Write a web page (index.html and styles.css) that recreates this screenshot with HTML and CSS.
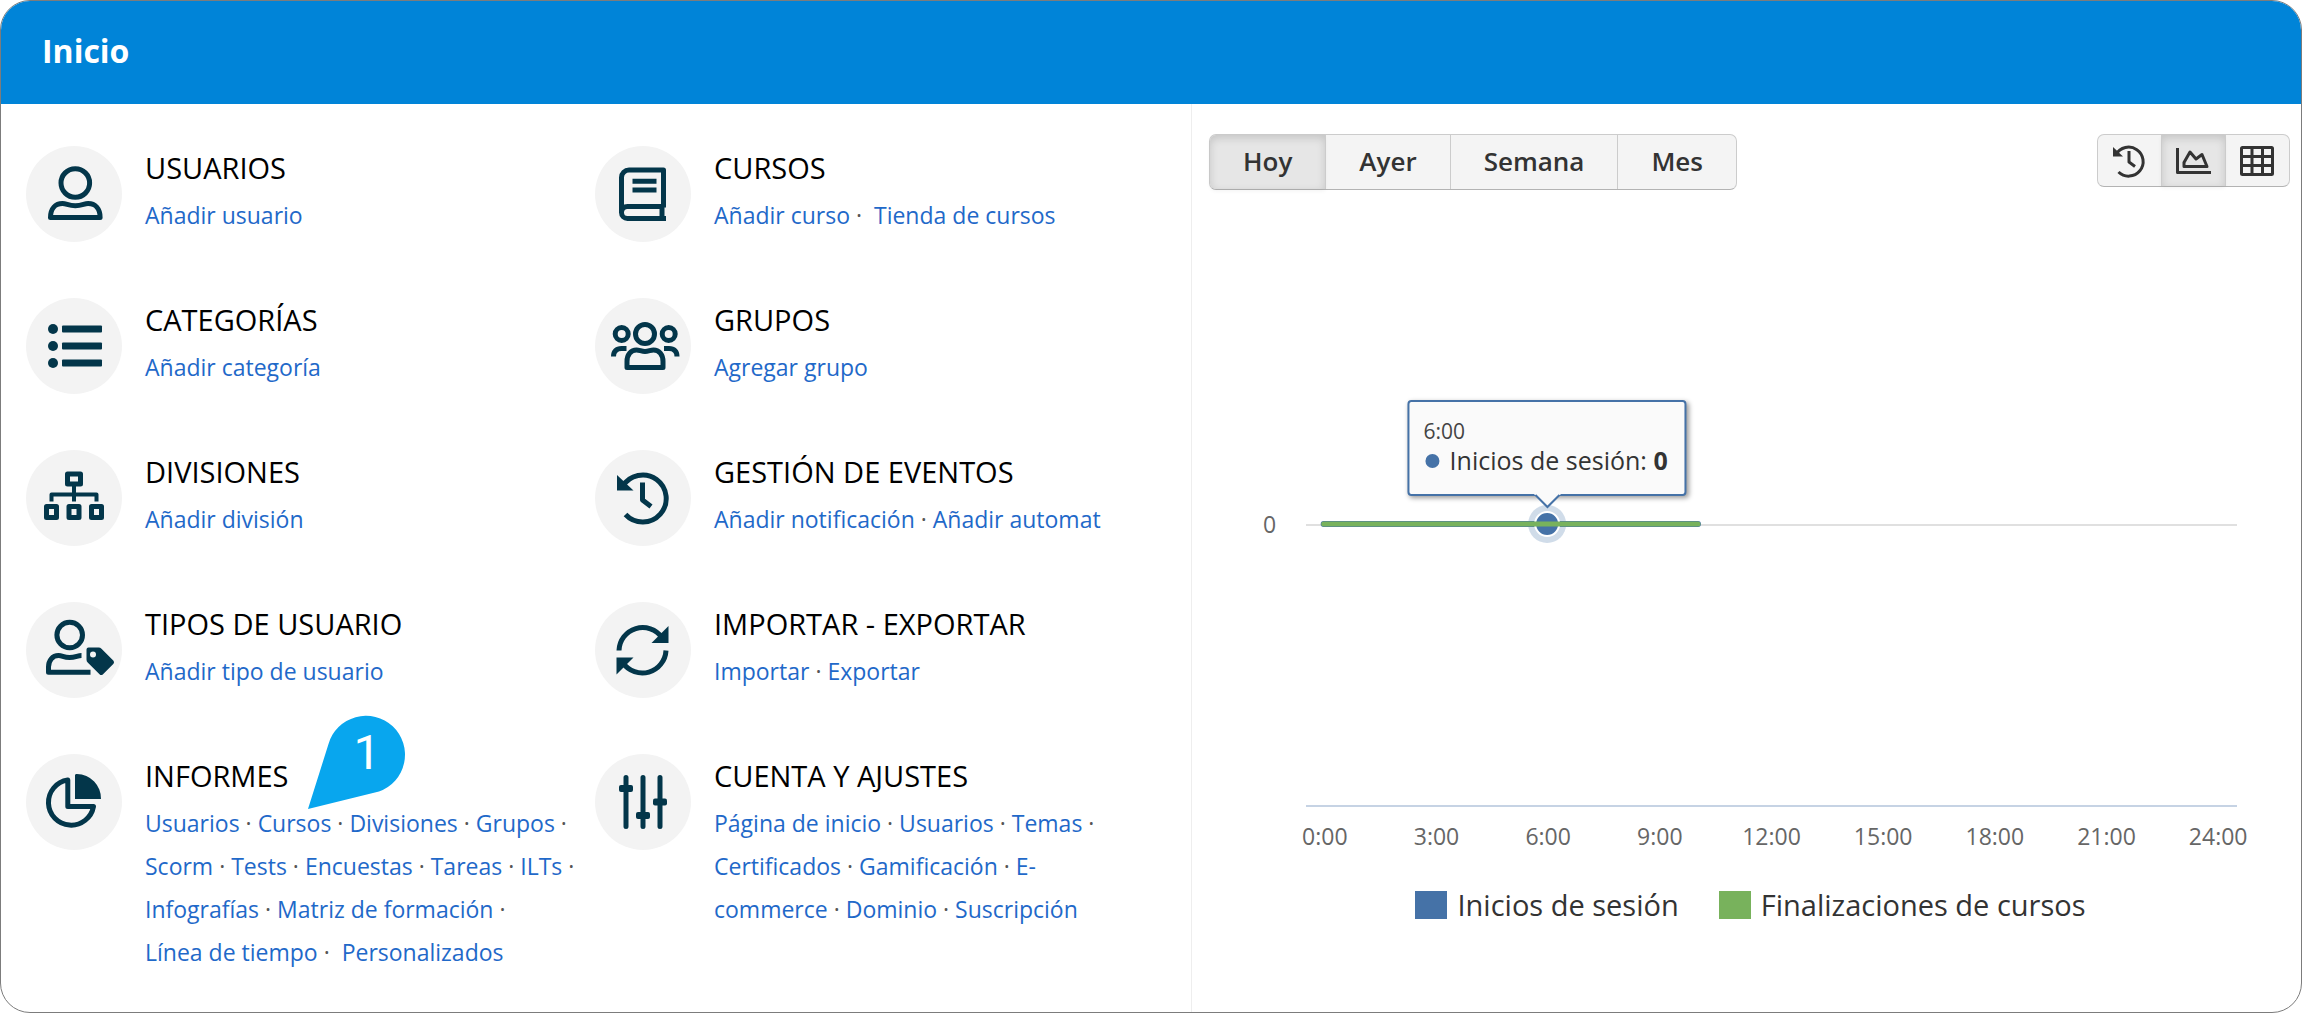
FILE: index.html
```html
<!DOCTYPE html>
<html lang="es">
<head>
<meta charset="utf-8">
<meta name="viewport" content="width=device-width, initial-scale=1">
<title>Inicio</title>
<link rel="stylesheet" href="styles.css">
</head>
<body>
<div class="card">
  <header class="topbar"><h1>Inicio</h1></header>
  <main class="content">
    <nav class="menu" aria-label="Administración">
      <section class="item">
        <svg class="icon" viewBox="0 0 96 96" aria-hidden="true"><circle cx="49.300" cy="37" r="14.300"/><path d="M24.500 71.500c0-9 5-14 12-14 4 0 6 2.200 12.800 2.200s8.800-2.200 12.800-2.200c7 0 12 5 12 14z"/></svg>
        <div class="text">
          <h2>USUARIOS</h2>
          <p><a href="#">Añadir usuario</a></p>
        </div>
      </section>
      <section class="item">
        <svg class="icon" viewBox="0 0 96 96" aria-hidden="true"><path d="M68.500 61.500V24H34a7.500 7.500 0 0 0-7.500 7.500v35a6 6 0 0 0 6 6H71M26.500 66.500a6 6 0 0 1 6-6h36M67 61v11M37.500 35.300h24M37.500 44h24"/></svg>
        <div class="text">
          <h2>CURSOS</h2>
          <p><a href="#">Añadir curso</a> ·&nbsp; <a href="#">Tienda de cursos</a></p>
        </div>
      </section>
      <section class="item">
        <svg class="icon" viewBox="0 0 96 96" aria-hidden="true"><g class="solid"><circle cx="27" cy="31" r="5"/><circle cx="27" cy="48" r="5"/><circle cx="27" cy="65" r="5"/><rect x="36" y="27.500" width="40" height="7" rx="1"/><rect x="36" y="44.500" width="40" height="7" rx="1"/><rect x="36" y="61.500" width="40" height="7" rx="1"/></g></svg>
        <div class="text">
          <h2>CATEGORÍAS</h2>
          <p><a href="#">Añadir categoría</a></p>
        </div>
      </section>
      <section class="item">
        <svg class="icon" viewBox="0 0 96 96" aria-hidden="true"><circle cx="50" cy="36" r="9.500"/><circle cx="26.700" cy="36" r="6.500"/><circle cx="73.700" cy="36" r="6.500"/><path d="M32 69.500v-6c0-7 4-11.500 9.500-11.500 3 0 5 1.500 8.500 1.500s5.500-1.500 8.500-1.500c5.500 0 9.500 4.500 9.500 11.500v6zM18.500 58.500c0-5 3-8 8-8h5M82 58.500c0-5-3-8-8-8h-5"/></svg>
        <div class="text">
          <h2>GRUPOS</h2>
          <p><a href="#">Agregar grupo</a></p>
        </div>
      </section>
      <section class="item">
        <svg class="icon" viewBox="0 0 96 96" aria-hidden="true"><rect x="41.500" y="24" width="13" height="10"/><rect x="20.500" y="56.500" width="10" height="11"/><rect x="43" y="56.500" width="10" height="11"/><rect x="65.500" y="56.500" width="10" height="11"/><path class="thin" d="M48 36v15.500M25.500 51.500v-7h45v7"/></svg>
        <div class="text">
          <h2>DIVISIONES</h2>
          <p><a href="#">Añadir división</a></p>
        </div>
      </section>
      <section class="item">
        <svg class="icon" viewBox="0 0 96 96" aria-hidden="true"><path d="M27.500 36.500A23.500 23.500 0 1 1 30.500 64.500M47.500 32.500V50l8.500 6.500"/><path class="solid" d="M22 25v15.500h16.500z"/></svg>
        <div class="text">
          <h2>GESTIÓN DE EVENTOS</h2>
          <p><a href="#">Añadir notificación</a> · <a href="#">Añadir automat</a></p>
        </div>
      </section>
      <section class="item">
        <svg class="icon" viewBox="0 0 96 96" aria-hidden="true"><circle cx="43.700" cy="33" r="12.800"/><path d="M55.500 53.500c-4 0-6 2-12 2s-7-2-11-2c-6 0-10 5-10 11.500v5.200h42"/><path class="solid" d="M62.500 45.500h10a4 4 0 0 1 3 1.200l12 12a2.500 2.500 0 0 1 0 3L77 72.200a2.500 2.500 0 0 1-3.500 0L61.700 60.500a4 4 0 0 1-1.200-3V47.500a2 2 0 0 1 2-2z"/><circle class="hole" cx="67" cy="52.500" r="3"/></svg>
        <div class="text">
          <h2>TIPOS DE USUARIO</h2>
          <p><a href="#">Añadir tipo de usuario</a></p>
        </div>
      </section>
      <section class="item">
        <svg class="icon" viewBox="0 0 96 96" aria-hidden="true"><path d="M24 48.500A23.700 23.700 0 0 1 67 35.500M71 48.500A23.700 23.700 0 0 1 28 61"/><path class="solid" d="M73.500 24v17H56.500zM21.500 72.500V55.500h17z"/></svg>
        <div class="text">
          <h2>IMPORTAR - EXPORTAR</h2>
          <p><a href="#">Importar</a> · <a href="#">Exportar</a></p>
        </div>
      </section>
      <section class="item">
        <svg class="icon" viewBox="0 0 96 96" aria-hidden="true"><path d="M41.800 26V52.500H67.500A22.700 22.700 0 1 1 41.800 26z"/><path class="solid" d="M51 20a24.500 24.500 0 0 1 24 25H49V21.500A1.500 1.500 0 0 1 51 20z"/></svg>
        <div class="text">
          <h2>INFORMES</h2>
          <p><a href="#">Usuarios</a>&nbsp;· <a href="#">Cursos</a>&nbsp;· <a href="#">Divisiones</a>&nbsp;· <a href="#">Grupos</a>&nbsp;· <a href="#">Scorm</a>&nbsp;· <a href="#">Tests</a>&nbsp;· <a href="#">Encuestas</a>&nbsp;· <a href="#">Tareas</a>&nbsp;· <a href="#">ILTs</a>&nbsp;· <a href="#">Infografías</a>&nbsp;· <a href="#">Matriz de formación</a>&nbsp;· <a href="#">Línea de tiempo</a>&nbsp;·&nbsp; <a href="#">Personalizados</a></p>
        </div>
        <div class="pin"><svg viewBox="0 0 98 94" aria-hidden="true"><path d="M0 94L20.500 29A39 39 0 1 1 71 76.500z"/></svg><span>1</span></div>
      </section>
      <section class="item">
        <svg class="icon" viewBox="0 0 96 96" aria-hidden="true"><path class="round" d="M31 23.500v49M48 23.500v49M65 23.500v49"/><g class="solid"><rect x="24" y="31" width="14" height="7" rx="2"/><rect x="41" y="58" width="14" height="7" rx="2"/><rect x="58" y="44.500" width="14" height="7" rx="2"/></g></svg>
        <div class="text">
          <h2>CUENTA Y AJUSTES</h2>
          <p><a href="#">Página de inicio</a>&nbsp;· <a href="#">Usuarios</a>&nbsp;· <a href="#">Temas</a>&nbsp;· <a href="#">Certificados</a>&nbsp;· <a href="#">Gamificación</a>&nbsp;· <a class="breakable" href="#">E-commerce</a>&nbsp;· <a href="#">Dominio</a>&nbsp;· <a href="#">Suscripción</a></p>
        </div>
      </section>
    </nav>

    <section class="stats" aria-label="Actividad">
      <div class="toolbar">
        <div class="group periods">
          <button type="button" class="active" aria-pressed="true">Hoy</button>
          <button type="button">Ayer</button>
          <button type="button">Semana</button>
          <button type="button">Mes</button>
        </div>
        <div class="group views">
          <button type="button" aria-label="Historial"><svg viewBox="0 0 36 36" aria-hidden="true"><path d="M5 11.500A14.500 14.500 0 1 1 7.500 29M18 8v11l6 4.500"/><path class="fill" d="M2 4v9.500h10z"/></svg></button>
          <button type="button" class="active" aria-pressed="true" aria-label="Gráfico"><svg viewBox="0 0 36 36" aria-hidden="true"><path d="M2.500 5v24.500H36M9 23.500v-4l6-10.500 6 7 6-4.500L32 23.500z"/></svg></button>
          <button type="button" aria-label="Tabla"><svg viewBox="0 0 36 36" aria-hidden="true"><rect x="2.500" y="4.500" width="31" height="27" rx="1"/><path d="M13 4v28M23.500 4v28M2 13.500h32M2 22.500h32"/></svg></button>
        </div>
      </div>

      <figure class="chart">
        <span class="y-label">0</span>
        <div class="plot">
          <svg class="series" aria-hidden="true">
            <line class="gridline" x1="0" x2="100%" y1="50%" y2="50%"/>
            <g class="data">
              <circle class="halo" cx="25.900%" cy="50%" r="19"/>
              <line class="logins" x1="1.900%" x2="42.100%" y1="50%" y2="50%"/>
              <circle class="marker" cx="25.900%" cy="50%" r="12"/>
              <line class="completions" x1="1.900%" x2="42.100%" y1="50%" y2="50%"/>
            </g>
          </svg>
          <div class="tooltip" style="left: 25.9%">
            <div class="time">6:00</div>
            <div class="value"><i class="dot"></i>Inicios de sesión: <b>0</b></div>
            <svg class="arrow" viewBox="0 0 26 14" aria-hidden="true"><path d="M0 0h26v1h-1L13 13 1 1H0z"/><polyline points="1,1 13,13 25,1"/></svg>
          </div>
        </div>
        <div class="x-labels">
          <span>0:00</span><span>3:00</span><span>6:00</span><span>9:00</span><span>12:00</span><span>15:00</span><span>18:00</span><span>21:00</span><span>24:00</span>
        </div>
        <figcaption class="legend">
          <span><i class="swatch blue"></i>Inicios de sesión</span>
          <span><i class="swatch green"></i>Finalizaciones de cursos</span>
        </figcaption>
      </figure>
    </section>
  </main>
</div>
</body>
</html>
```
FILE: styles.css
```css
* {
  box-sizing: border-box;
}

body {
  margin: 0;
  background: #fff;
  font-family: "Open Sans", "Noto Sans", sans-serif;
}

h1, h2, p, figure {
  margin: 0;
}

.card {
  display: flex;
  flex-direction: column;
  min-height: 100vh;
  border: 1px solid #7c7c7c;
  border-radius: 30px;
  overflow: hidden;
}

.topbar {
  display: flex;
  align-items: center;
  height: 103px;
  padding: 0 41px 3px;
  background: #0084d8;
}

.topbar h1 {
  color: #fff;
  font-size: 32px;
  line-height: 44px;
  font-weight: 700;
}

.content {
  display: grid;
  grid-template-columns: minmax(0, 1190fr) minmax(0, 1110fr);
  flex: 1;
}

/* Left: section menu */

.menu {
  display: grid;
  grid-template-columns: 553fr 536fr;
  align-content: start;
  gap: 56px 16px;
  padding: 42px 60px 20px 25px;
}

.item {
  position: relative;
  display: flex;
  gap: 23px;
  min-width: 0;
  min-height: 96px;
}

.icon {
  flex: none;
  width: 96px;
  height: 96px;
  border-radius: 50%;
  background: #f3f3f3;
  fill: none;
  stroke: #03364a;
  stroke-width: 5;
  stroke-linejoin: round;
  overflow: visible;
}

.icon .solid {
  fill: #03364a;
  stroke: none;
}

.icon .hole {
  fill: #f3f3f3;
  stroke: none;
}

.icon .thin {
  stroke-width: 4;
}

.icon .round {
  stroke-linecap: round;
}

.text h2 {
  color: #000;
  font-size: 29px;
  line-height: 44px;
  font-weight: 500;
}

.text p {
  margin-top: 4px;
  color: #555;
  font-size: 23px;
  line-height: 43px;
}

.text a {
  color: #1f69c9;
  text-decoration: none;
  white-space: nowrap;
}

.text a.breakable {
  white-space: normal;
}

.pin {
  position: absolute;
  left: 282px;
  top: -39px;
  width: 98px;
  height: 94px;
}

.pin svg {
  display: block;
  fill: #08a6ee;
}

.pin span {
  position: absolute;
  left: 20px;
  top: 0;
  width: 78px;
  color: #fff;
  font-family: Roboto, sans-serif;
  font-size: 48px;
  line-height: 76px;
  text-align: center;
}

/* Right: activity chart */

.stats {
  display: flex;
  flex-direction: column;
  padding: 30px 11px 30px 17px;
  border-left: 1px solid #eee;
}

.toolbar {
  display: flex;
  justify-content: space-between;
  align-items: flex-start;
}

.group {
  display: flex;
  border: 1px solid #ccc;
  border-bottom-color: #b3b3b3;
  border-radius: 7px;
  background: #f4f4f4;
}

.group button {
  padding: 0 33px 2px;
  border: 0;
  border-left: 1px solid #ccc;
  background: none;
  color: #333;
  font: 600 26px/52px "Open Sans", sans-serif;
}

.group button:first-child {
  border-left: 0;
  border-radius: 6px 0 0 6px;
}

.group .active {
  background: #e6e6e6;
  box-shadow: inset 0 3px 8px rgba(0, 0, 0, .15), 0 2px 4px rgba(0, 0, 0, .05);
}

.group.views button {
  display: flex;
  align-items: center;
  height: 51px;
  padding: 0 14px 0 13px;
}

.views svg {
  width: 36px;
  height: 36px;
  fill: none;
  stroke: #333;
  stroke-width: 3;
  stroke-linejoin: round;
}

.views .fill {
  fill: #333;
  stroke: none;
}

.chart {
  display: grid;
  grid-template-columns: 67px minmax(0, 1fr);
  margin: 55px 53px 0 30px;
}

.y-label {
  align-self: center;
  padding: 0 0 4px 24px;
  color: #666;
  font-size: 23px;
  line-height: 32px;
}

.plot {
  position: relative;
  height: 562px;
  border-bottom: 2px solid #c6d3e4;
}

.series {
  display: block;
  width: 100%;
  height: 100%;
  overflow: visible;
}

.gridline {
  stroke: #e0e0e0;
  stroke-width: 2;
}

.data {
  transform: translateY(-1px);
}

.halo {
  fill: #4572a7;
  opacity: .25;
}

.logins {
  stroke: #4572a7;
  stroke-width: 6;
  stroke-linecap: round;
}

.marker {
  fill: #4572a7;
  stroke: #fff;
  stroke-width: 2;
}

.completions {
  stroke: #78b25c;
  stroke-width: 5;
  stroke-linecap: round;
}

.tooltip {
  position: absolute;
  bottom: 309px;
  width: max-content;
  padding: 16px 17px 18px 14px;
  transform: translateX(-50%);
  border: 2px solid #4572a7;
  border-radius: 4px;
  background: #fafafa;
  box-shadow: 2px 2px 5px rgba(0, 0, 0, .4);
  color: #333;
}

.time {
  color: #444;
  font-size: 21px;
  line-height: 26px;
}

.value {
  display: flex;
  align-items: center;
  font-size: 25px;
  line-height: 32px;
  white-space: pre;
}

.dot {
  width: 14px;
  height: 14px;
  margin: 2px 10px 0 2px;
  border-radius: 50%;
  background: #4572a7;
}

.arrow {
  position: absolute;
  left: 50%;
  top: 100%;
  width: 26px;
  height: 14px;
  margin-left: -13px;
  fill: #fafafa;
  overflow: visible;
}

.arrow polyline {
  fill: none;
  stroke: #4572a7;
  stroke-width: 2;
}

.x-labels {
  grid-column: 2;
  display: grid;
  grid-template-columns: repeat(9, 1fr);
  margin: 13px -37px 0;
  color: #666;
  font-size: 23px;
  line-height: 32px;
  text-align: center;
}

.legend {
  grid-column: 2;
  display: flex;
  justify-content: center;
  gap: 40px;
  margin: 31px 42px 0 0;
  color: #333;
  font-size: 29px;
  line-height: 44px;
}

.legend span {
  display: flex;
  align-items: center;
  gap: 10px;
}

.swatch {
  width: 32px;
  height: 28px;
}

.swatch.blue {
  background: #4572a7;
}

.swatch.green {
  background: #78b25c;
}
```
